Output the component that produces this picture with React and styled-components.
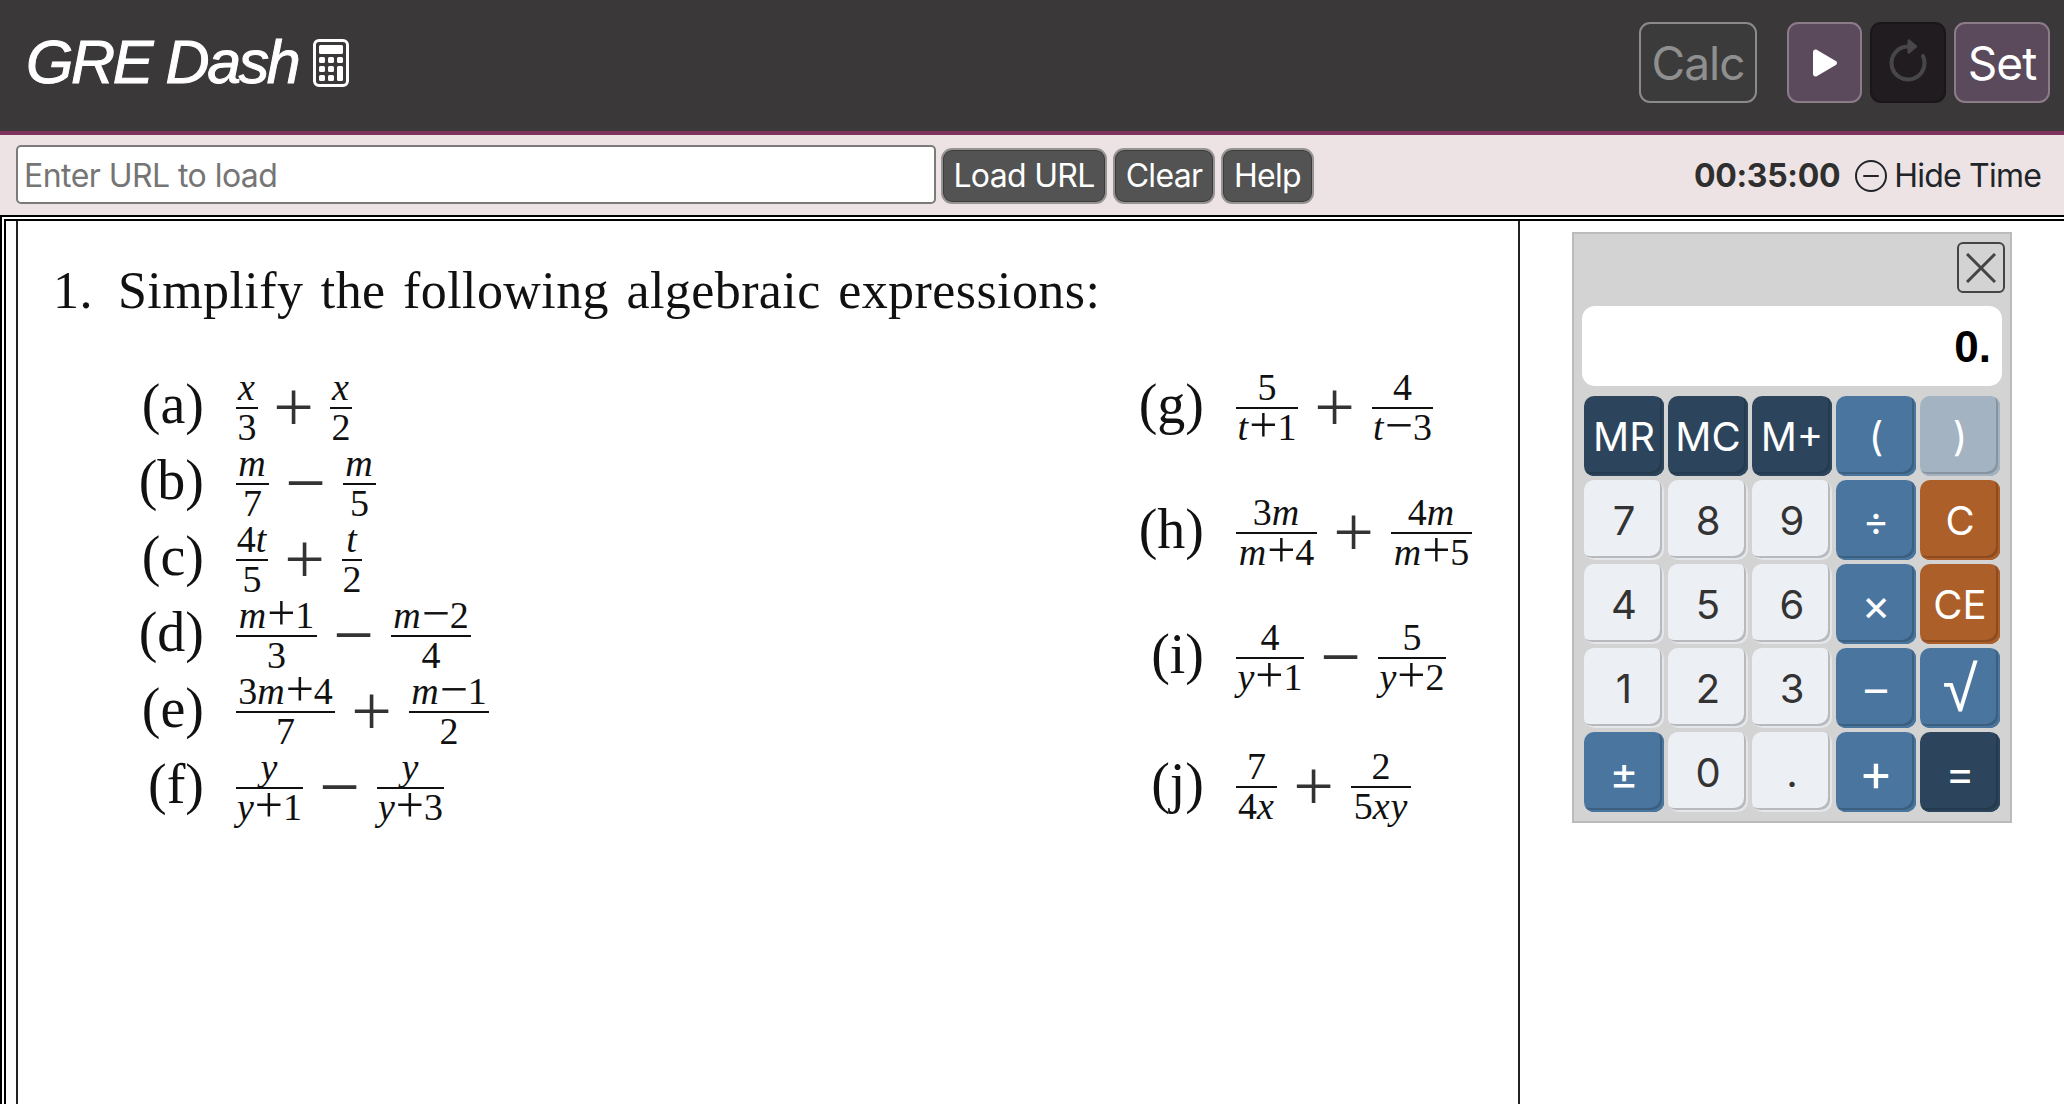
import React from "react";
import styled, { createGlobalStyle } from "styled-components";

const Global = createGlobalStyle`
  * { box-sizing: border-box; }
  html, body { margin: 0; padding: 0; background: #fff; }
  body { font-family: Inter, "Liberation Sans", sans-serif; overflow: hidden; }
`;

const Page = styled.div`
  height: 1104px;
  display: flex;
  flex-direction: column;
`;

const Header = styled.header`
  height: 135px;
  flex: none;
  display: flex;
  align-items: flex-start;
  justify-content: space-between;
  padding: 22px 14px 0 26px;
  background: #3a3839;
  border-bottom: 4px solid #80325f;
`;

const Brand = styled.div`
  display: flex;
  align-items: center;
  gap: 9px;
  margin-top: 10px;
  color: #fff;
  font: italic 400 61px/1 "Liberation Sans", sans-serif;
  letter-spacing: -2.4px;
  -webkit-text-stroke: 1px #fff;
`;

const HeaderTools = styled.div`
  display: flex;
  gap: 8px;
`;

const toolColors = {
  calc: { bg: "#3b3b3b", border: "#8b8b8b", text: "#8f8f8f" },
  play: { bg: "#5b4a5b", border: "#8c7b89", text: "#fff" },
  off: { bg: "#201c1f", border: "#191719", text: "#484848" },
};

const ToolButton = styled.button`
  height: 81px;
  width: ${(p) => p.$w}px;
  margin-right: ${(p) => p.$after || 0}px;
  display: flex;
  align-items: center;
  justify-content: center;
  padding: 0;
  border-radius: 11px;
  border: 2px solid ${(p) => toolColors[p.$kind].border};
  background: ${(p) => toolColors[p.$kind].bg};
  color: ${(p) => toolColors[p.$kind].text};
  font: 400 46px/1 Inter, sans-serif;
  letter-spacing: -1px;
`;

const SubBar = styled.div`
  height: 80px;
  flex: none;
  display: flex;
  align-items: flex-start;
  padding: 10px 23px 0 16px;
  background: #ede3e5;
`;

const UrlInput = styled.input`
  width: 920px;
  height: 59px;
  padding: 2px 6px 0;
  border: 2px solid #7b7b7b;
  border-radius: 5px;
  background: #fff;
  font: 400 32px Inter, sans-serif;
  letter-spacing: -0.55px;
  &::placeholder { color: #757575; opacity: 1; }
`;

const BarButton = styled.button`
  height: 56px;
  width: ${(p) => p.$w}px;
  margin: 3px 0 0 ${(p) => p.$gap}px;
  padding: 0;
  border: 2px solid #979594;
  border-radius: 11px;
  background: #525352;
  box-shadow: inset 0 0 0 1px #3c3c3c;
  color: #fff;
  font: 400 32px/1 Inter, sans-serif;
  letter-spacing: -0.7px;
`;

const TimeBox = styled.div`
  margin-left: auto;
  height: 59px;
  padding-top: 2px;
  display: flex;
  align-items: center;
  color: #212529;
  font-size: 32px;
`;

const Clock = styled.span`
  font-weight: 700;
  color: #2f2f2f;
  letter-spacing: -0.3px;
  margin-right: 15px;
`;

const HideLabel = styled.span`
  margin-left: 7px;
  letter-spacing: -0.8px;
`;

const Frame = styled.div`
  flex: 1;
  min-height: 0;
  border-top: 2px solid #000;
  border-left: 2px solid #000;
  padding: 2px 0 0 2px;
  display: flex;
`;

const FrameInner = styled.div`
  flex: 1;
  display: flex;
  border-top: 2px solid #000;
  border-left: 2px solid #000;
  padding-left: 10px;
`;

const Sheet = styled.main`
  width: 1504px;
  flex: none;
  border-left: 2px solid #222;
  border-right: 2px solid #222;
  padding: 40px 0 0 35px;
  color: #111;
  font-family: "Liberation Serif", "Times New Roman", serif;
`;

const Question = styled.div`
  display: flex;
  font-size: 52px;
  line-height: 60px;
  letter-spacing: 0.42px;
  word-spacing: 4px;
`;

const QuestionNum = styled.span`
  width: 65px;
`;

const Columns = styled.div`
  display: grid;
  grid-template-columns: 1000px 1fr;
  margin: 49px 0 0 67px;
`;

const ExerciseList = styled.div`
  display: flex;
  flex-direction: column;
  gap: ${(p) => p.$gap}px;
`;

const Exercise = styled.div`
  height: 76px;
  margin-top: ${(p) => p.$nudge || 0}px;
  display: flex;
  align-items: center;
`;

const Label = styled.span`
  width: 84px;
  margin-right: 32px;
  padding-bottom: 8px;
  text-align: right;
  font-size: 56px;
  line-height: 60px;
`;

const Expr = styled.div`
  display: flex;
  align-items: center;
`;

const Fraction = styled.div`
  width: ${(p) => p.$w}px;
  display: flex;
  flex-direction: column;
  align-items: stretch;
  text-align: center;
  font-size: 38px;
  line-height: 37px;
  white-space: nowrap;
  i { letter-spacing: 1px; }
`;

const Numer = styled.span`
  border-bottom: 2px solid #111;
  height: 38px;
  line-height: 33px;
`;

const Denom = styled.span`
  height: 37px;
`;

// the + and − inside a fraction sit wider than the serif's own glyphs
const Sym = styled.span`
  font-size: 50px;
  line-height: 0;
  vertical-align: -2px;
`;

const Op = styled.span`
  width: 35px;
  height: 60px;
  margin: 0 ${(p) => p.$r || 20}px 0 ${(p) => p.$l || 19}px;
  display: flex;
  justify-content: center;
  color: #333;
  font-size: 72px;
  line-height: 58px;
`;

const SidePanel = styled.aside`
  flex: 1;
  padding: 11px 0 0 52px;
`;

const Calculator = styled.div`
  width: 440px;
  height: 591px;
  padding: 8px 8px 0 8px;
  background: #d3d3d3;
  border: 2px solid #bbb;
`;

const CloseRow = styled.div`
  display: flex;
  justify-content: flex-end;
`;

const CloseButton = styled.button`
  width: 48px;
  height: 51px;
  margin-right: -3px;
  padding: 0;
  display: flex;
  align-items: center;
  justify-content: center;
  background: transparent;
  border: 2px solid #444;
  border-radius: 6px;
`;

const Display = styled.div`
  height: 80px;
  margin: 13px 0 0 0;
  padding: 2px 11px 0 0;
  display: flex;
  align-items: center;
  justify-content: flex-end;
  background: #fff;
  border-radius: 13px;
  color: #000;
  font: 700 44px/1 "Liberation Sans", sans-serif;
`;

const Keys = styled.div`
  display: grid;
  grid-template-columns: repeat(5, 80px);
  grid-auto-rows: 80px;
  gap: 4px;
  margin: 10px 0 0 2px;
`;

const keyTones = {
  navy: { face: "#2c455d", line: "#243a4e", edge: "#2c455d", text: "#fff" },
  blue: { face: "#4a759f", line: "#3b607f", edge: "#4a759f", text: "#fff" },
  mute: { face: "#a3b3c1", line: "#87949f", edge: "#a3b3c1", text: "#fff" },
  rust: { face: "#ad5f2a", line: "#8c4b20", edge: "#ad5f2a", text: "#fff" },
  light: { face: "#eceff4", line: "#b7b9bd", edge: "#e4e6ea", text: "#333" },
};

const Key = styled.button`
  padding: 2px 0 0;
  border: 0;
  border-radius: 10px;
  background: ${(p) => keyTones[p.$tone].face};
  color: ${(p) => keyTones[p.$tone].text};
  box-shadow:
    inset -2px -2px 0 ${(p) => keyTones[p.$tone].edge},
    inset -4px -4px 0 ${(p) => keyTones[p.$tone].line};
  font: 400 ${(p) => p.$size || 40}px/1 ${(p) => p.$face || "Inter"}, "DejaVu Sans", sans-serif;
`;

const CalcIcon = () => (
  <svg width="48" height="48" viewBox="0 0 16 16" fill="#fff" stroke="none">
    <path d="M12 1a1 1 0 0 1 1 1v12a1 1 0 0 1-1 1H4a1 1 0 0 1-1-1V2a1 1 0 0 1 1-1zM4 0a2 2 0 0 0-2 2v12a2 2 0 0 0 2 2h8a2 2 0 0 0 2-2V2a2 2 0 0 0-2-2z" />
    <path d="M4 2.5a.5.5 0 0 1 .5-.5h7a.5.5 0 0 1 .5.5v2a.5.5 0 0 1-.5.5h-7a.5.5 0 0 1-.5-.5zm0 4a.5.5 0 0 1 .5-.5h1a.5.5 0 0 1 .5.5v1a.5.5 0 0 1-.5.5h-1a.5.5 0 0 1-.5-.5zm0 3a.5.5 0 0 1 .5-.5h1a.5.5 0 0 1 .5.5v1a.5.5 0 0 1-.5.5h-1a.5.5 0 0 1-.5-.5zm0 3a.5.5 0 0 1 .5-.5h1a.5.5 0 0 1 .5.5v1a.5.5 0 0 1-.5.5h-1a.5.5 0 0 1-.5-.5zm3-6a.5.5 0 0 1 .5-.5h1a.5.5 0 0 1 .5.5v1a.5.5 0 0 1-.5.5h-1a.5.5 0 0 1-.5-.5zm0 3a.5.5 0 0 1 .5-.5h1a.5.5 0 0 1 .5.5v1a.5.5 0 0 1-.5.5h-1a.5.5 0 0 1-.5-.5zm0 3a.5.5 0 0 1 .5-.5h1a.5.5 0 0 1 .5.5v1a.5.5 0 0 1-.5.5h-1a.5.5 0 0 1-.5-.5zm3-6a.5.5 0 0 1 .5-.5h1a.5.5 0 0 1 .5.5v1a.5.5 0 0 1-.5.5h-1a.5.5 0 0 1-.5-.5zm0 3a.5.5 0 0 1 .5-.5h1a.5.5 0 0 1 .5.5v4a.5.5 0 0 1-.5.5h-1a.5.5 0 0 1-.5-.5z" />
  </svg>
);

const PlayIcon = () => (
  <svg width="48" height="48" viewBox="0 0 16 16" fill="#fff">
    <path d="m11.596 8.697-6.363 3.692c-.54.313-1.233-.066-1.233-.697V4.308c0-.63.692-1.01 1.233-.696l6.363 3.692a.802.802 0 0 1 0 1.393" />
  </svg>
);

const RestartIcon = () => (
  <svg width="48" height="48" viewBox="0 0 16 16" fill="#484848" stroke="#484848" strokeWidth="0.35">
    <path fillRule="evenodd" d="M8 3a5 5 0 1 0 4.546 2.914.5.5 0 0 1 .908-.417A6 6 0 1 1 8 2z" />
    <path d="M8 4.466V.534a.25.25 0 0 1 .41-.192l2.36 1.966c.12.1.12.284 0 .384L8.41 4.658A.25.25 0 0 1 8 4.466" />
  </svg>
);

const DashCircle = () => (
  <svg width="32" height="32" viewBox="0 0 16 16" fill="#212529">
    <path d="M8 15A7 7 0 1 1 8 1a7 7 0 0 1 0 14m0 1A8 8 0 1 0 8 0a8 8 0 0 0 0 16" />
    <path d="M4 8a.5.5 0 0 1 .5-.5h7a.5.5 0 0 1 0 1h-7A.5.5 0 0 1 4 8" />
  </svg>
);

const CloseIcon = () => (
  <svg width="30" height="30" viewBox="0 0 30 30" stroke="#444" strokeWidth="3">
    <path d="M1 1 L29 29 M29 1 L1 29" />
  </svg>
);

const Frac = ({ w, n, d }) => (
  <Fraction $w={w}>
    <Numer>{n}</Numer>
    <Denom>{d}</Denom>
  </Fraction>
);

const I = ({ children }) => <i>{children}</i>;

const leftItems = [
  { label: "(a)", op: "+", a: [22, <I>x</I>, "3"], b: [22, <I>x</I>, "2"], l: 18, r: 19 },
  { label: "(b)", op: "−", a: [33, <I>m</I>, "7"], b: [33, <I>m</I>, "5"] },
  { label: "(c)", op: "+", a: [32, <>4<I>t</I></>, "5"], b: [20, <I>t</I>, "2"] },
  { label: "(d)", op: "−", a: [81, <><I>m</I><Sym>+</Sym>1</>, "3"], b: [80, <><I>m</I><Sym>−</Sym>2</>, "4"] },
  { label: "(e)", op: "+", a: [99, <>3<I>m</I><Sym>+</Sym>4</>, "7"], b: [80, <><I>m</I><Sym>−</Sym>1</>, "2"] },
  { label: "(f)", op: "−", a: [67, <I>y</I>, <><I>y</I><Sym>+</Sym>1</>], b: [67, <I>y</I>, <><I>y</I><Sym>+</Sym>3</>] },
];

const rightItems = [
  { label: "(g)", op: "+", a: [62, "5", <><I>t</I><Sym>+</Sym>1</>], b: [61, "4", <><I>t</I><Sym>−</Sym>3</>] },
  { label: "(h)", op: "+", a: [81, <>3<I>m</I></>, <><I>m</I><Sym>+</Sym>4</>], b: [81, <>4<I>m</I></>, <><I>m</I><Sym>+</Sym>5</>] },
  { label: "(i)", op: "−", a: [68, "4", <><I>y</I><Sym>+</Sym>1</>], b: [68, "5", <><I>y</I><Sym>+</Sym>2</>] },
  { label: "(j)", op: "+", a: [41, "7", <>4<I>x</I></>], b: [60, "2", <>5<I>xy</I></>], nudge: 4 },
];

const keys = [
  ["MR", "navy"], ["MC", "navy"], ["M+", "navy"], ["(", "blue"], [")", "mute"],
  ["7", "light"], ["8", "light"], ["9", "light"], ["÷", "blue", 40], ["C", "rust"],
  ["4", "light"], ["5", "light"], ["6", "light"], ["×", "blue", 44], ["CE", "rust"],
  ["1", "light"], ["2", "light"], ["3", "light"], ["–", "blue", 44], ["√", "blue", 64, "Liberation Sans"],
  ["±", "blue", 44], ["0", "light"], [".", "light"], ["+", "blue", 52], ["=", "navy", 44],
];

const ExerciseRow = ({ item }) => (
  <Exercise $nudge={item.nudge}>
    <Label>{item.label}</Label>
    <Expr>
      <Frac w={item.a[0]} n={item.a[1]} d={item.a[2]} />
      <Op $l={item.l} $r={item.r}>{item.op}</Op>
      <Frac w={item.b[0]} n={item.b[1]} d={item.b[2]} />
    </Expr>
  </Exercise>
);

export default function App() {
  return (
    <Page>
      <Global />
      <Header>
        <Brand>
          GRE Dash
          <CalcIcon />
        </Brand>
        <HeaderTools>
          <ToolButton $kind="calc" $w={118} $after={22}>Calc</ToolButton>
          <ToolButton $kind="play" $w={75}><PlayIcon /></ToolButton>
          <ToolButton $kind="off" $w={76}><RestartIcon /></ToolButton>
          <ToolButton $kind="play" $w={96}>Set</ToolButton>
        </HeaderTools>
      </Header>
      <SubBar>
        <UrlInput placeholder="Enter URL to load" />
        <BarButton $w={166} $gap={5}>Load URL</BarButton>
        <BarButton $w={102} $gap={6}>Clear</BarButton>
        <BarButton $w={93} $gap={6}>Help</BarButton>
        <TimeBox>
          <Clock>00:35:00</Clock>
          <DashCircle />
          <HideLabel>Hide Time</HideLabel>
        </TimeBox>
      </SubBar>
      <Frame>
        <FrameInner>
          <Sheet>
            <Question>
              <QuestionNum>1.</QuestionNum>
              <span>Simplify the following algebraic expressions:</span>
            </Question>
            <Columns>
              <ExerciseList $gap={0}>
                {leftItems.map((item) => <ExerciseRow key={item.label} item={item} />)}
              </ExerciseList>
              <ExerciseList $gap={49}>
                {rightItems.map((item) => <ExerciseRow key={item.label} item={item} />)}
              </ExerciseList>
            </Columns>
          </Sheet>
          <SidePanel>
            <Calculator>
              <CloseRow>
                <CloseButton aria-label="Close"><CloseIcon /></CloseButton>
              </CloseRow>
              <Display>0.</Display>
              <Keys>
                {keys.map(([label, tone, size, face]) => (
                  <Key key={label} $tone={tone} $size={size} $face={face}>{label}</Key>
                ))}
              </Keys>
            </Calculator>
          </SidePanel>
        </FrameInner>
      </Frame>
    </Page>
  );
}
